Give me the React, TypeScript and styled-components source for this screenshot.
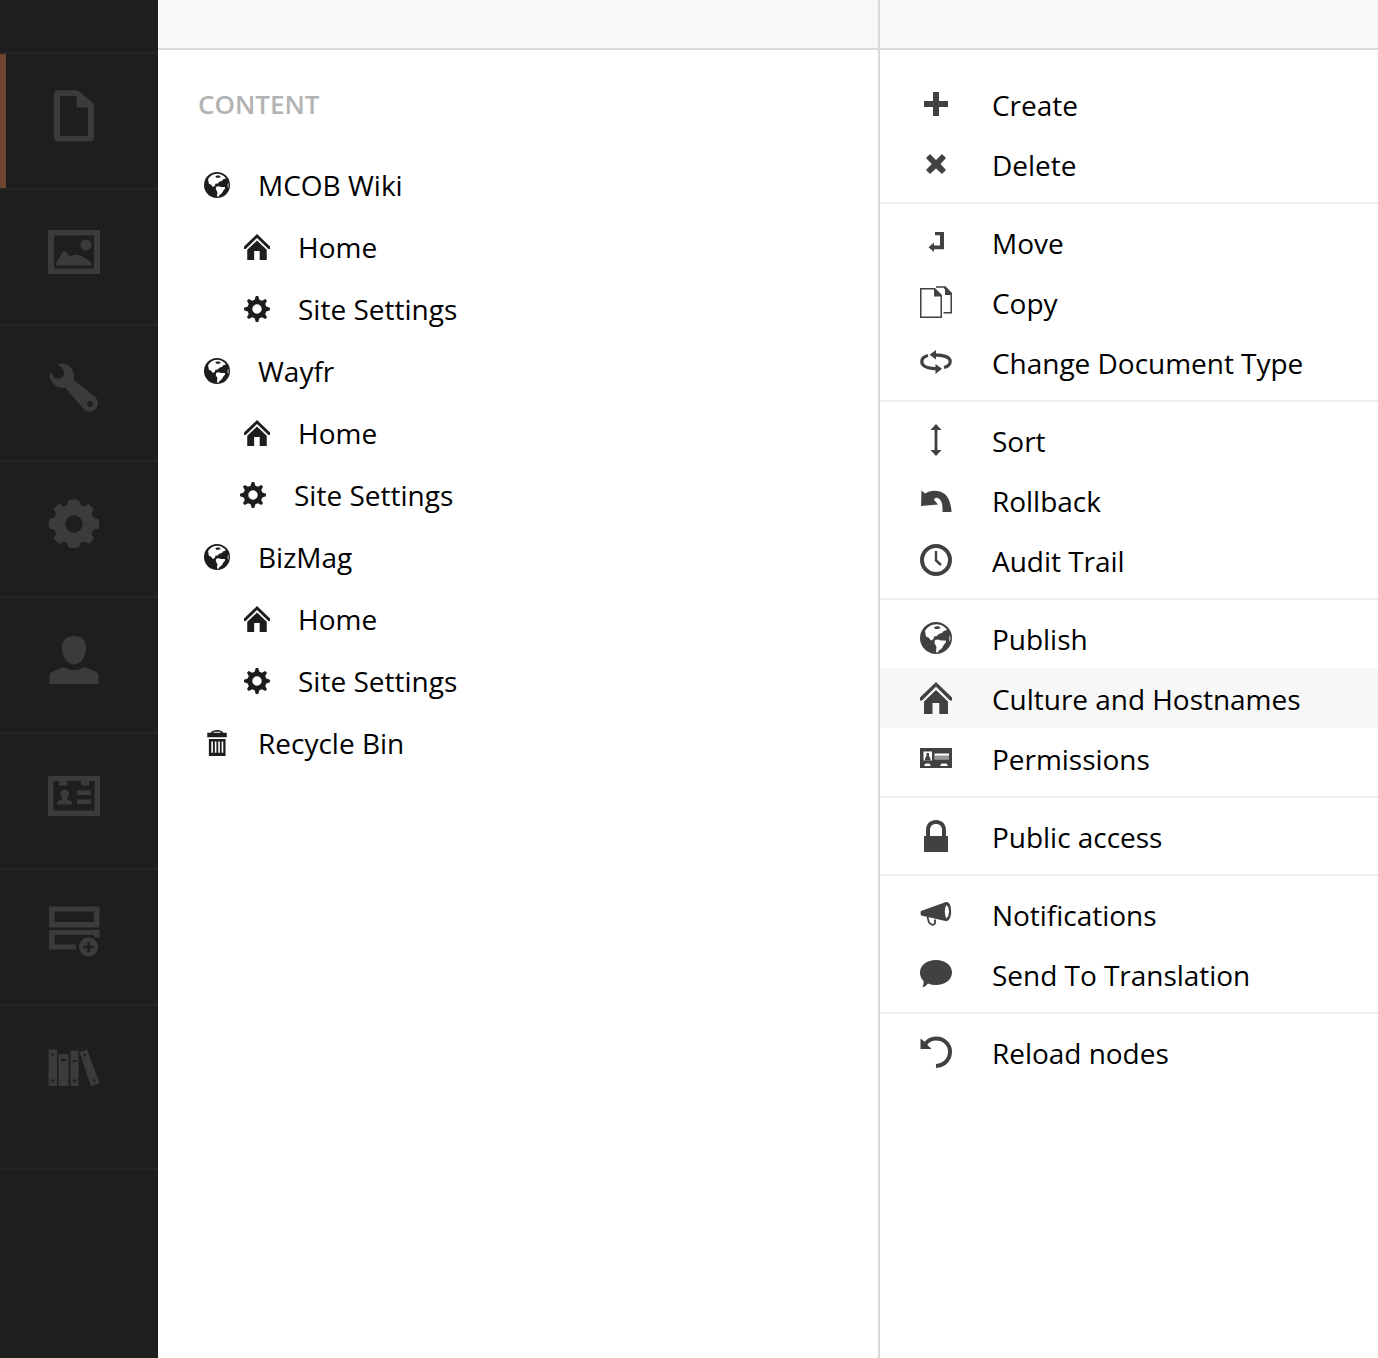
import React from "react";
import styled, { createGlobalStyle } from "styled-components";

const GlobalStyle = createGlobalStyle`
  * { box-sizing: border-box; }
  body { margin: 0; background: #fff; font-family: "Open Sans", "Noto Sans", sans-serif; }
`;

const Shell = styled.div`
  display: grid;
  grid-template-columns: 158px 722px 1fr;
  height: 1358px;
  overflow: hidden;
`;

const Sidebar = styled.nav`
  background: #1e1e1e;
  padding-top: 52px;
  display: flex;
  flex-direction: column;
`;

const Section = styled.a<{ $active?: boolean; $tall?: boolean }>`
  display: flex;
  height: ${(p) => (p.$tall ? 164 : 136)}px;
  padding: 36px 0 0 48px;
  border-top: 2px solid #252525;
  color: #3b3b3b;
  background: ${(p) => (p.$active ? "linear-gradient(90deg, #6e462f 6px, transparent 6px)" : "none")};
`;

const SidebarEnd = styled.div`
  border-top: 2px solid #252525;
`;

const Column = styled.section<{ $divided?: boolean }>`
  display: flex;
  flex-direction: column;
  min-width: 0;
  border-right: ${(p) => (p.$divided ? "2px solid #d9d9d9" : "none")};
`;

const TopBar = styled.header`
  height: 50px;
  flex: none;
  background: #f8f8f8;
  border-bottom: 2px solid #d9d9d9;
`;

const Title = styled.h5`
  margin: 0;
  height: 104px;
  padding: 36px 0 0 40px;
  font-size: 26px;
  line-height: 36px;
  font-weight: 600;
  color: #b3b3b3;
`;

const TreeRow = styled.div<{ $indent: number }>`
  display: flex;
  align-items: center;
  gap: 28px;
  height: 62px;
  padding-left: ${(p) => 46 + p.$indent}px;
  color: #1d1d1d;
`;

const Label = styled.span`
  font-size: 28px;
  line-height: 40px;
  color: #000;
  white-space: nowrap;
`;

const MenuLabel = styled(Label)`
  padding-top: 2px;
  letter-spacing: -0.03px;
`;

const Menu = styled.div`
  padding-top: 16px;
`;

const MenuGroup = styled.div`
  padding: 8px 0;
  & + & { border-top: 2px solid #ededed; }
`;

const MenuRow = styled.div<{ $hover?: boolean }>`
  display: flex;
  align-items: center;
  gap: 40px;
  height: 60px;
  padding-left: 40px;
  color: #414141;
  background: ${(p) => (p.$hover ? "#f7f7f7" : "transparent")};
`;

const Glyph = styled.svg`
  display: block;
  flex: none;
  fill: currentColor;
  overflow: visible;
`;

const cog = (teeth: number, c: number, outer: number, inner: number, hole: number, wide: number, tip: number) => {
  const pts: string[] = [];
  const step = (Math.PI * 2) / teeth;
  for (let i = 0; i < teeth; i++) {
    const a = i * step - Math.PI / 2;
    [[-wide, inner], [-tip, outer], [tip, outer], [wide, inner]].forEach(([o, r]) => {
      pts.push(`${(c + Math.cos(a + o * step) * r).toFixed(2)} ${(c + Math.sin(a + o * step) * r).toFixed(2)}`);
    });
  }
  return `M${pts.join("L")}ZM${c - hole} ${c}a${hole} ${hole} 0 1 0 ${hole * 2} 0a${hole} ${hole} 0 1 0 ${-hole * 2} 0Z`;
};

const sectionIcons: React.ReactNode[] = [
  <path fillRule="evenodd" d="M10 .300H27Q30 .300 32 2L44 12Q46 14 46 17V47.500Q46 51.500 42 51.500H10Q6 51.500 6 47.500V4.300Q6 .300 10 .300ZM12 6V46H40V17.500H28.500V6Z" />,
  <>
    <path fillRule="evenodd" d="M0 4H52V48H0ZM6 9.500V42.500H46V9.500Z" />
    <circle cx="38" cy="19" r="5.600" />
    <path d="M8 39.500L8.500 36L15 25.500Q17 24 19 27L22.500 31Q24 28.500 29 28.500Q36 30 43.500 37L44 39.500Z" />
  </>,
  <path fillRule="evenodd" d="M9.500 2C17-.200 24.500 4 26 12Q26.500 15 25.800 18L46.500 34.500A8.200 8.200 0 0 1 36.500 48L17.500 26C9 27 .500 20 1.500 11.500L3.500 10.500Q5 17.500 11.500 16.800Q17.500 15.500 15.500 8.500Q14 5 9.500 2ZM42 39a3 3 0 1 0 .01 0Z" />,
  <path fillRule="evenodd" d="M20.500 2.500Q26 .200 31 2.500L32.500 7L36 8.500L40.500 5.800L45.700 11L43.500 15.500L45 19.500L50.500 21Q52.500 26 50.500 30.500L45 32L43.500 36L46 40.500L41 46L36 43.500L32.500 45L31 49Q26 51.500 20.500 49L19 45L15.500 43.500L11 46L5.500 40.500L8 36L6.500 32L1.500 30.500Q-.500 26 1.500 21L6.500 19.500L8 15.500L5.500 11L11 5.800L15.500 8.500L19 7ZM26 17.300a8.700 8.700 0 1 0 .01 0Z" />,
  <>
    <path d="M26 2C34 2 38 6.500 38 14C38 22 33 30.500 26 30.500S14 22 14 14C14 6.500 18 2 26 2Z" />
    <path d="M1.500 50V41.500Q1.500 38 6 37L14 33.500Q17 33 19 34.500Q26 37.500 33 34.500Q35 33 38 33.500L46 37Q50.500 38.500 50.500 41.500V50Z" />
  </>,
  <>
    <path fillRule="evenodd" d="M0 6H52V46H0ZM5.500 11V40.500H46.500V11H41V15.500H33V11H19V15.500H11V11Z" />
    <circle cx="16.700" cy="24" r="4.500" />
    <path d="M14.500 26H19V29L24 32V34.500H9V32L14.500 29ZM29 20.500H43V25H29ZM29 29.500H43V34H29Z" />
  </>,
  <>
    <path fillRule="evenodd" d="M1 .500H51.500V21.500H1ZM6.500 5.500V16H46V5.500ZM1 24H51.500V31.500H46V29H6.500V38.500H28V43.500H1Z" />
    <circle cx="40.500" cy="41" r="11.500" fill="#1e1e1e" />
    <path fillRule="evenodd" d="M40.500 31.500a9.500 9.500 0 1 0 .01 0ZM39.300 36H42V39.700H46V42.300H42V46H39.300V42.300H35.500V39.700H39.300Z" />
  </>,
  <>
    <path fillRule="evenodd" d="M.500 7.500H9V44H.500ZM3 11.500V13.500H6.500V11.500ZM3 37.500V39.500H6.500V37.500ZM10.500 12H20.500V44H10.500ZM13 16.500V19H18V16.500ZM22.500 8.500H30.500V44H22.500ZM25 18V20H28.500V18ZM25 37.500V39.500H28.500V37.500Z" />
    <path fillRule="evenodd" d="M31.500 10L39 7.500L51.500 41L43 44.500ZM35 12.500L36 14.500L38 13.500L37.500 11.500ZM44.500 38L45.500 40L47.500 39L46.500 37Z" />
  </>,
];

const globe = (
  <>
    <circle cx="16" cy="16" r="16" />
    <path fill="#fff" d="M5 9C7 5.500 10 3 14 2.500Q20 1 25 5.500L27 8Q23 8.500 22 11Q18 11.500 17 14L14 14.500L13.500 17L11 18.500Q9 15 6 14.500Z" />
    <path d="M14 5L18 4L21 6L18 7L15 7Z" />
    <path fill="#fff" d="M15 18L18 17.500L21 18.500L25.500 18.500Q27 20 24 22.500Q23 26 19 28.500L17 31Q15.500 30 16.500 25L14.500 21Z" />
    <path fill="#fff" opacity="0.600" d="M29.500 13Q28 16 29.500 20L30.500 18V15Z" />
  </>
);
const home = (
  <>
    <path d="M16 0L32 15.500V18.500H30L16 4.800L2 18.500H0V15.500Z" />
    <path d="M16 8L28 19.500V32H19.300V21H12.500V32H4V19.500Z" />
  </>
);
const settings = <path fillRule="evenodd" d={cog(8, 16, 16, 11.8, 5.8, 0.32, 0.12)} />;
const trash = (
  <>
    <path fillRule="evenodd" d="M8 3.500L11 1Q16-1 21 1L24 3.500H28V9H4V3.500ZM11 3.500H21L19 2H13Z" />
    <path fillRule="evenodd" d="M6 11H26.500V32H6ZM9 14V28H11V14ZM13.300 14V28H15.300V14ZM17.500 14V28H19.500V14ZM21.700 14V28H23.700V14Z" />
  </>
);

const tree = [
  { label: "MCOB Wiki", icon: globe, indent: 0 },
  { label: "Home", icon: home, indent: 40 },
  { label: "Site Settings", icon: settings, indent: 40 },
  { label: "Wayfr", icon: globe, indent: 0 },
  { label: "Home", icon: home, indent: 40 },
  { label: "Site Settings", icon: settings, indent: 36 },
  { label: "BizMag", icon: globe, indent: 0 },
  { label: "Home", icon: home, indent: 40 },
  { label: "Site Settings", icon: settings, indent: 40 },
  { label: "Recycle Bin", icon: trash, indent: 0 },
];

type Action = { label: string; icon: React.ReactNode; hover?: boolean };

const menu: Action[][] = [
  [
    { label: "Create", icon: <path d="M13 4H19V13H28V19H19V28H13V19H4V13H13Z" /> },
    { label: "Delete", icon: <path d="M10 6L16 12L22 6L26 10L20.500 16L26 22L22 26L16 20.500L10 26L6 22L11.800 16L6 10Z" /> },
  ],
  [
    { label: "Move", icon: <path d="M15 6H24V23.300H14V26L8.500 21.200L14 16.500V19.500H20V9.200H15Z" /> },
    {
      label: "Copy",
      icon: (
        <>
          <path fillRule="evenodd" d="M0 2H15L22 9V32H0ZM1.500 3.500V30.500H20.500V10.500H14V3.500Z" />
          <path d="M16 .300H25.500L32 7V27.500H23.500V26H30.500V9H25V3.500L23.500 1.800H16Z" />
        </>
      ),
    },
    {
      label: "Change Document Type",
      icon: (
        <>
          <path fill="none" stroke="currentColor" strokeWidth="3.200" d="M8 9.500C4 10.500 1.800 13 1.800 15.500C1.800 20.500 9 22.700 18 22.700M24 21.500C28 20.500 30.200 18 30.200 15.500C30.200 11 23 8.800 14 8.800" />
          <path d="M16 4V13.500L9.500 8.800ZM15.500 18V28L22 22.800Z" />
        </>
      ),
    },
  ],
  [
    { label: "Sort", icon: <path d="M16 0L21.500 6H17.400V26H21.500L16 32L10.500 26H14.600V6H10.500Z" /> },
    { label: "Rollback", icon: <path d="M1.500 6.500L5 9.500Q10 6 17 7C26 7.500 31 16 31.500 28H22.500Q23 19 20 15.500Q17 12.500 14.500 14.500L14 16L18 20.500L1 22Z" /> },
    {
      label: "Audit Trail",
      icon: (
        <>
          <circle cx="16" cy="16" r="14" fill="none" stroke="currentColor" strokeWidth="4" />
          <path fill="none" stroke="currentColor" strokeWidth="2.400" d="M16 7V16.500L21 21" />
        </>
      ),
    },
  ],
  [
    { label: "Publish", icon: globe },
    { label: "Culture and Hostnames", icon: home, hover: true },
    {
      label: "Permissions",
      icon: (
        <>
          <path fillRule="evenodd" d="M0 6H32V26H0ZM3.500 9.500V18.500H12V9.500ZM14.500 11.500V17.500H29V11.500ZM4 24H11L9.500 21.500H5.500ZM20 24H28L26.500 21.500H21.500Z" />
          <path d="M6.500 11H9V14L10.500 16.500V18.500H5V16.500L6.500 14Z" />
          <path opacity="0.550" d="M14.500 13.500H29V17.500H14.500Z" />
        </>
      ),
    },
  ],
  [
    {
      label: "Public access",
      icon: <path fillRule="evenodd" d="M6 16V10C6 3.500 10.500 0 16 0S26 3.500 26 10V16H28V32H4V16ZM10 16H22V10C22 6 19.500 4 16 4S10 6 10 10Z" />,
    },
  ],
  [
    {
      label: "Notifications",
      icon: (
        <>
          <path fillRule="evenodd" d="M1 13L26 4Q29 3.500 30.500 8Q32 15 30 20Q28.500 24 25.500 23L1 17.500Q0 15 1 13ZM26.500 7Q24.500 10 24.800 14Q25 18.500 26.500 20.500Q29 18 29 14Q29 9 26.500 7Z" />
          <path fill="none" stroke="currentColor" strokeWidth="1.800" d="M7.500 19L9 24.500Q12.500 28.500 15 25.500L15 21.500" />
        </>
      ),
    },
    { label: "Send To Translation", icon: <path d="M16 2C25 2 32 7 32 14.500S25 27 16 27Q11 27 8 25.500Q6 28.500 2.500 29.500Q4 26 3.500 23Q0 19.500 0 14.500C0 7 7 2 16 2Z" /> },
  ],
  [
    {
      label: "Reload nodes",
      icon: (
        <>
          <path fill="none" stroke="currentColor" strokeWidth="4" d="M5 8.500C8 4 12 2.500 16 2.500C24 2.500 30 8.500 30 15.500C30 23 25 29.500 16 30" />
          <path d="M.500 2.500V13H11.500L8 9.500L5 6Z" />
        </>
      ),
    },
  ],
];

export default function App() {
  return (
    <>
      <GlobalStyle />
      <Shell>
        <Sidebar>
          {sectionIcons.map((icon, i) => (
            <Section key={i} $active={i === 0} $tall={i === sectionIcons.length - 1}>
              <Glyph width="52" height="52" viewBox="0 0 52 52">{icon}</Glyph>
            </Section>
          ))}
          <SidebarEnd />
        </Sidebar>
        <Column $divided>
          <TopBar />
          <Title>CONTENT</Title>
          {tree.map((n, i) => (
            <TreeRow key={i} $indent={n.indent}>
              <Glyph width="26" height="26" viewBox="0 0 32 32">{n.icon}</Glyph>
              <Label>{n.label}</Label>
            </TreeRow>
          ))}
        </Column>
        <Column>
          <TopBar />
          <Menu>
            {menu.map((group, i) => (
              <MenuGroup key={i}>
                {group.map((a) => (
                  <MenuRow key={a.label} $hover={a.hover}>
                    <Glyph width="32" height="32" viewBox="0 0 32 32">{a.icon}</Glyph>
                    <MenuLabel>{a.label}</MenuLabel>
                  </MenuRow>
                ))}
              </MenuGroup>
            ))}
          </Menu>
        </Column>
      </Shell>
    </>
  );
}
